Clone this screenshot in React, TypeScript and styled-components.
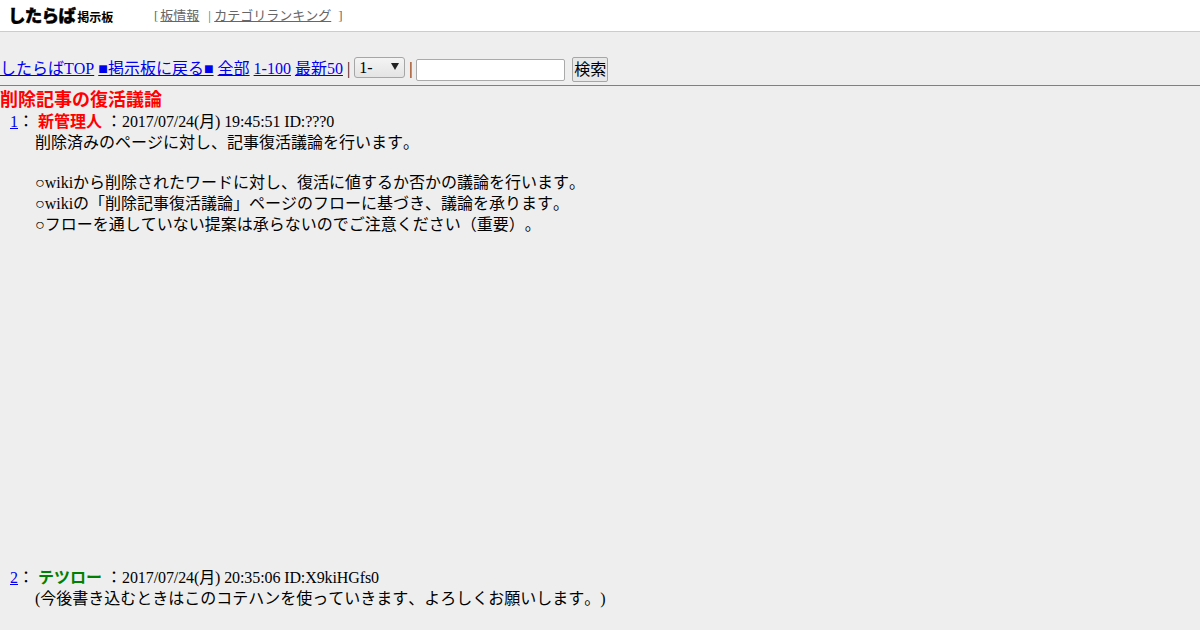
import React from 'react';
import styled, { createGlobalStyle } from 'styled-components';

const Global = createGlobalStyle`
  html, body {
    margin: 0;
    padding: 0;
    background: #eeeeee;
    height: 630px;
    overflow: hidden;
  }
  body {
    font-family: "Liberation Serif", "Noto Sans CJK JP", serif;
    font-size: 16px;
    line-height: 21px;
    color: #000;
    text-spacing-trim: space-all;
    font-kerning: none;
  }
  a {
    color: #0000ee;
  }
`;

const TopBar = styled.div`
  display: flex;
  align-items: center;
  height: 31px;
  background: #fff;
  border-bottom: 1px solid #cccccc;
`;

const Logo = styled.div`
  display: flex;
  align-items: baseline;
  width: 154px;
  padding-left: 8px;
  box-sizing: border-box;
  font-family: "Noto Sans CJK JP", sans-serif;
  font-weight: 900;
  color: #000;
  white-space: nowrap;
`;

const LogoMain = styled.span`
  font-size: 17.5px;
  line-height: 20px;
  letter-spacing: -0.7px;
  -webkit-text-stroke: 0.4px #000;
`;

const LogoSub = styled.span`
  font-size: 12px;
  line-height: 20px;
  margin-left: 2px;
  font-weight: 700;
`;

const BoardLinks = styled.div`
  font-size: 13px;
  color: #666;
  white-space: nowrap;
  a {
    color: #666;
  }
`;

const Gap = styled.span<{ $w: number }>`
  display: inline-block;
  width: ${(p) => p.$w}px;
`;

const Toolbar = styled.div`
  display: flex;
  align-items: flex-start;
  gap: 4px;
  height: 53px;
  padding-top: 25px;
  box-sizing: border-box;
  white-space: nowrap;
  a,
  span {
    margin-top: 1px;
  }
`;

const FakeSelect = styled.div`
  display: flex;
  align-items: center;
  justify-content: space-between;
  box-sizing: border-box;
  width: 51px;
  height: 21px;
  padding: 0 5px 0 4px;
  background: linear-gradient(#f4f4f4, #e4e4e4);
  border: 1px solid #a6a6a6;
  border-radius: 3px;
  font-size: 16px;
  &::after {
    content: '';
    border-left: 4px solid transparent;
    border-right: 4px solid transparent;
    border-top: 7px solid #222;
    margin-bottom: 2px;
  }
`;

const SearchInput = styled.input`
  box-sizing: border-box;
  width: 149px;
  height: 22px;
  margin: 2px 3px 0 0;
  padding: 0 2px;
  background: #fff;
  border: 1px solid #aaaaaa;
  border-radius: 2px;
`;

const SearchButton = styled.button`
  box-sizing: border-box;
  width: 36px;
  height: 25px;
  padding: 0;
  background: #e8e8e8;
  border: 1px solid #a6a6a6;
  border-radius: 2px;
  font-family: inherit;
  font-size: 16px;
  line-height: 21px;
  color: #000;
`;

const Rule = styled.hr`
  height: 1px;
  margin: 0;
  border: 0;
  background: #808080;
`;

const Title = styled.h1`
  margin: 3px 0 0;
  font-size: 18px;
  line-height: 22px;
  font-weight: bold;
  color: #ff0000;
`;

const Thread = styled.dl`
  margin: 0;
`;

const Head = styled.dt`
  height: 21px;
  padding-left: 10px;
  white-space: pre;
`;

const Name = styled.b<{ $color: string }>`
  color: ${(p) => p.$color};
`;

const Meta = styled.span`
  letter-spacing: -0.1px;
`;

const Body = styled.dd<{ $h?: number }>`
  margin: 0 0 0 35px;
  height: ${(p) => (p.$h ? `${p.$h}px` : 'auto')};
`;

const Line = styled.div`
  height: 21px;
  white-space: pre;
`;

const BlankLine = styled.div`
  height: 19px;
`;

const posts = [
  {
    no: 1,
    name: '新管理人',
    color: '#ff0000',
    meta: '2017/07/24(月) 19:45:51 ID:???0',
    height: 435,
    lines: [
      '削除済みのページに対し、記事復活議論を行います。',
      '',
      '○wikiから削除されたワードに対し、復活に値するか否かの議論を行います。',
      '○wikiの「削除記事復活議論」ページのフローに基づき、議論を承ります。',
      '○フローを通していない提案は承らないのでご注意ください（重要）。',
    ],
  },
  {
    no: 2,
    name: 'テツロー',
    color: '#008000',
    meta: '2017/07/24(月) 20:35:06 ID:X9kiHGfs0',
    lines: ['(今後書き込むときはこのコテハンを使っていきます、よろしくお願いします。)', '', '【紹介文】'],
  },
];

export default function App() {
  return (
    <>
      <Global />
      <TopBar>
        <Logo>
          <LogoMain>したらば</LogoMain>
          <LogoSub>掲示板</LogoSub>
        </Logo>
        <BoardLinks>
          [<Gap $w={2} />
          <a href="#">板情報</a>
          <Gap $w={9} />| <a href="#">カテゴリランキング</a>
          <Gap $w={7} />]
        </BoardLinks>
      </TopBar>
      <Toolbar>
        <a href="#">したらばTOP</a>
        <a href="#">■掲示板に戻る■</a>
        <a href="#">全部</a>
        <a href="#">1-100</a>
        <a href="#">最新50</a>
        <span>|</span>
        <FakeSelect>1-</FakeSelect>
        <span>|</span>
        <SearchInput type="text" />
        <SearchButton type="button">検索</SearchButton>
      </Toolbar>
      <Rule />
      <Title>削除記事の復活議論</Title>
      <Thread>
        {posts.map((post) => (
          <React.Fragment key={post.no}>
            <Head>
              <a href="#">{post.no}</a>： <Name $color={post.color}>{post.name}</Name> ：<Meta>{post.meta}</Meta>
            </Head>
            <Body $h={post.height}>
              {post.lines.map((line, i) => (line ? <Line key={i}>{line}</Line> : <BlankLine key={i} />))}
            </Body>
          </React.Fragment>
        ))}
      </Thread>
    </>
  );
}
